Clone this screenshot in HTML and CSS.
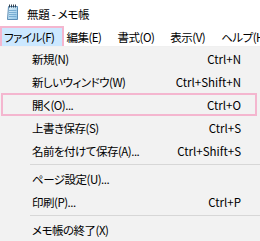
FILE: index.html
```html
<!DOCTYPE html>
<html lang="ja">
<head>
<meta charset="utf-8">
<link rel="stylesheet" href="styles.css">
</head>
<body>
<div class="window">
  <div class="titlebar">
    <svg class="app-icon" width="13" height="16" viewBox="0 0 13 16">
      <defs>
        <linearGradient id="pad" x1="0" y1="0" x2="1" y2="1">
          <stop offset="0" stop-color="#e6f4fc"/>
          <stop offset="1" stop-color="#8cc3e6"/>
        </linearGradient>
      </defs>
      <path d="M2.5 2.5 H11.5 V15.5 H1.5 Z" fill="url(#pad)" stroke="#5b8db5"/>
      <g stroke="#2f3f4f" stroke-width="1">
        <line x1="3.5" y1="0.5" x2="3.5" y2="3.5"/>
        <line x1="5.5" y1="0.5" x2="5.5" y2="3.5"/>
        <line x1="7.5" y1="0.5" x2="7.5" y2="3.5"/>
        <line x1="9.5" y1="0.5" x2="9.5" y2="3.5"/>
      </g>
      <g stroke="#7aaed3" stroke-width="1">
        <line x1="3" y1="6.5" x2="10.5" y2="6.5"/>
        <line x1="3" y1="8.5" x2="10.5" y2="8.5"/>
        <line x1="3" y1="10.5" x2="10.5" y2="10.5"/>
        <line x1="3" y1="12.5" x2="10.5" y2="12.5"/>
      </g>
    </svg>
    <span class="title">無題 - メモ帳</span>
  </div>
  <div class="menubar">
    <span class="menu-item active">ファイル(F)</span>
    <span class="menu-item">編集(E)</span>
    <span class="menu-item">書式(O)</span>
    <span class="menu-item">表示(V)</span>
    <span class="menu-item">ヘルプ(H)</span>
  </div>
  <div class="dropdown">
    <div class="row"><span class="label">新規(N)</span><span class="key">Ctrl+N</span></div>
    <div class="row"><span class="label">新しいウィンドウ(W)</span><span class="key">Ctrl+Shift+N</span></div>
    <div class="row marked"><span class="label">開く(O)...</span><span class="key">Ctrl+O</span></div>
    <div class="row"><span class="label">上書き保存(S)</span><span class="key">Ctrl+S</span></div>
    <div class="row"><span class="label">名前を付けて保存(A)...</span><span class="key">Ctrl+Shift+S</span></div>
    <div class="sep"></div>
    <div class="row"><span class="label">ページ設定(U)...</span><span class="key"></span></div>
    <div class="row"><span class="label">印刷(P)...</span><span class="key">Ctrl+P</span></div>
    <div class="sep"></div>
    <div class="row"><span class="label">メモ帳の終了(X)</span><span class="key"></span></div>
  </div>
</div>
</body>
</html>
```

FILE: styles.css
```css
html, body {
  margin: 0;
  padding: 0;
  background: #ffffff;
}
body {
  font-family: "Noto Sans CJK JP", "Noto Sans", sans-serif;
  font-feature-settings: "palt";
  font-size: 11.5px;
  color: #000;
  width: 260px;
  height: 241px;
  overflow: hidden;
}
.window {
  display: flex;
  flex-direction: column;
}
.titlebar {
  height: 26px;
  display: flex;
  align-items: center;
  padding-left: 6px;
  gap: 8px;
  background: #fff;
}
.app-icon {
  display: block;
  margin-top: -2px;
}
.title {
  color: #000;
  margin-top: 1px;
  letter-spacing: -0.3px;
}
.menubar {
  height: 20px;
  display: flex;
  align-items: stretch;
  background: #fff;
  border-bottom: 1px solid #f0f0f0;
  white-space: nowrap;
  overflow: hidden;
}
.menu-item {
  display: flex;
  align-items: center;
  padding: 0 6px;
  border: 2px solid transparent;
  height: 22px;
  box-sizing: border-box;
  letter-spacing: -0.5px;
}
.menu-item.active {
  background: #cce8ff;
  border-color: #f4b6cf;
  padding: 0 8px 0 2px;
}
.menu-item.active + .menu-item {
  padding-left: 0;
}
.dropdown {
  background: #f2f2f2;
  padding: 0;
  height: 194px;
}
.row {
  height: 23px;
  display: flex;
  align-items: center;
  justify-content: space-between;
  padding: 0 14px 0 29px;
  border: 2px solid transparent;
  box-sizing: border-box;
  margin: 0 3px 0 1px;
}
.row.marked {
  border-color: #f4b6cf;
}
.label {
  letter-spacing: -0.5px;
}
.key {
  text-align: right;
}
.sep {
  height: 1px;
  background: #d7d7d7;
  margin: 2px 0 2px 30px;
}
```
